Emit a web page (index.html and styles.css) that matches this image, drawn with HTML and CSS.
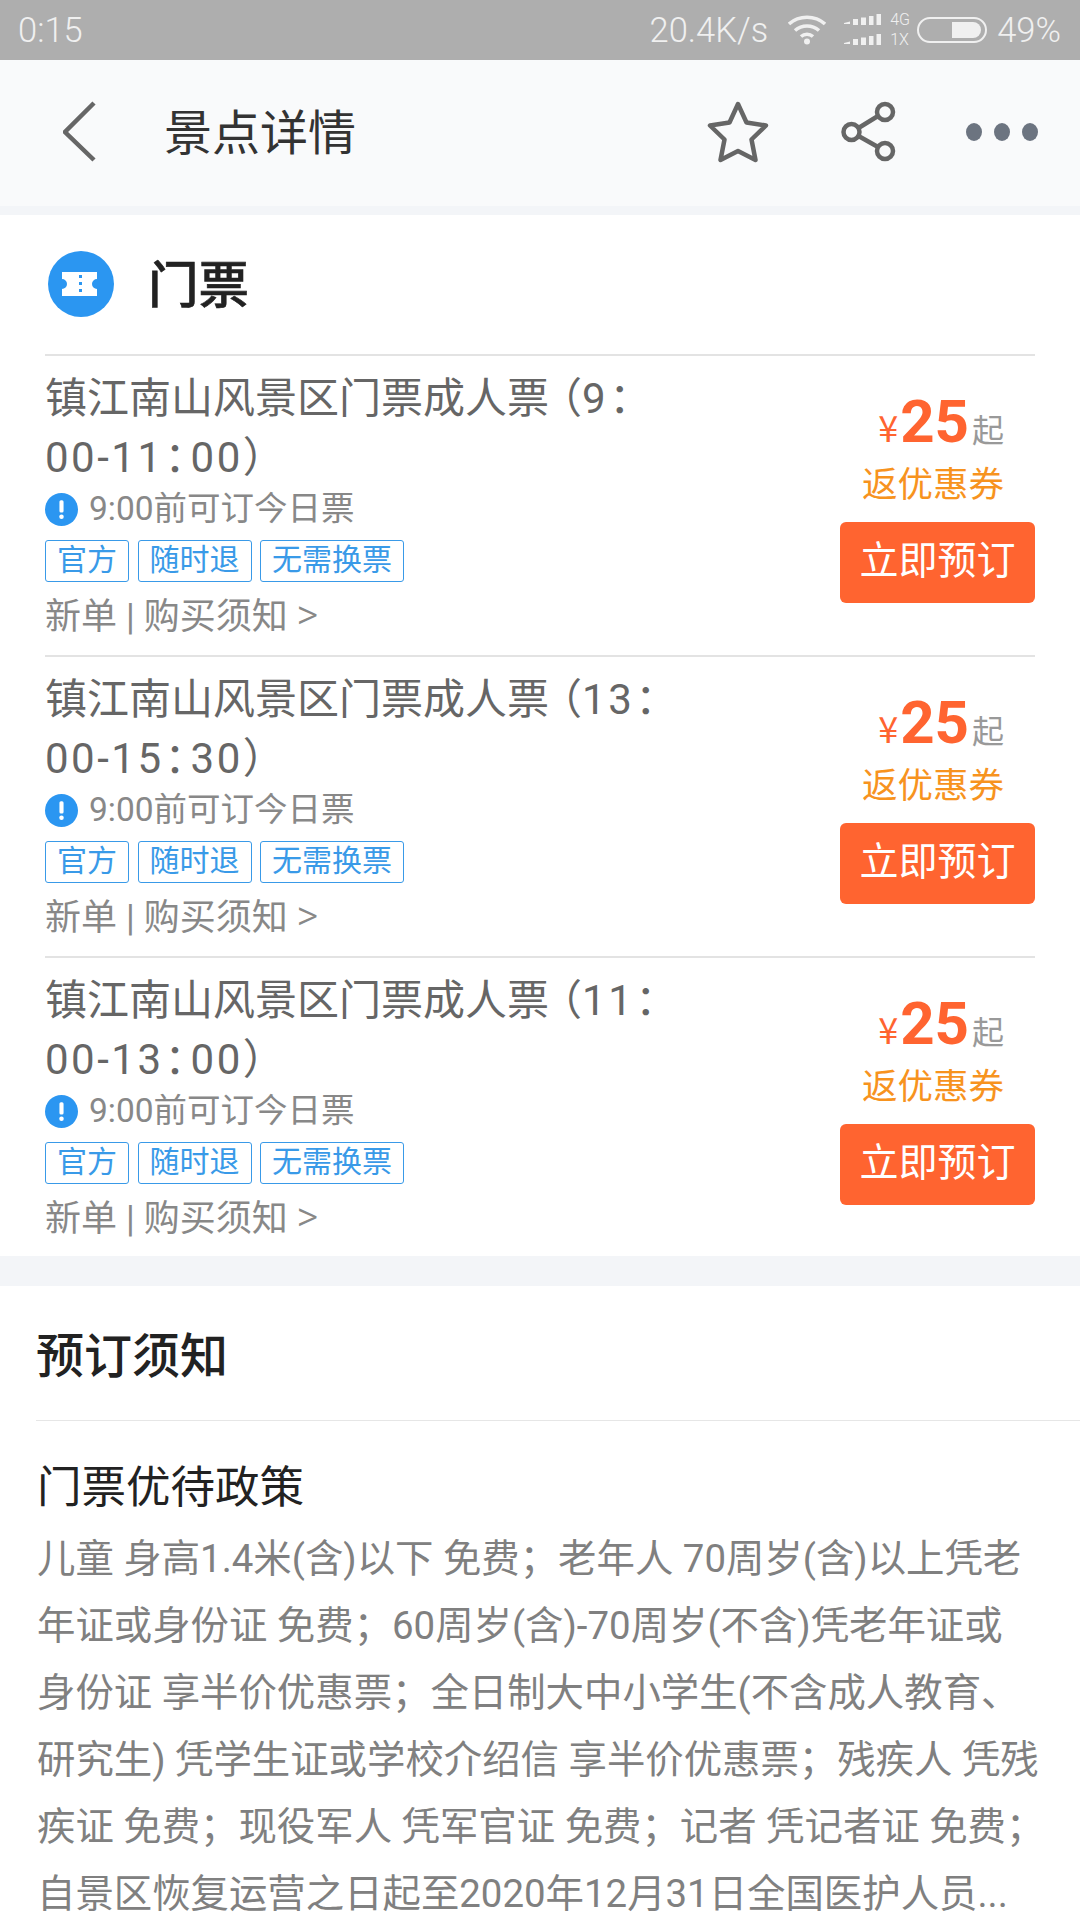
FILE: index.html
```html
<!DOCTYPE html>
<html lang="zh-CN">
<head>
<meta charset="utf-8">
<title>景点详情</title>
<link rel="stylesheet" href="styles.css">
</head>
<body>
<div class="page">
  <header class="status">
    <span class="clock">0:15</span>
    <div class="status-right">
      <span class="speed">20.4K/s</span>
      <svg class="wifi" width="38" height="30" viewBox="0 0 38 30"><path d="M1 9C11 0 27 0 37 9" fill="none" stroke="#f0f0f0" stroke-width="3.6"/><path d="M7 15.500C14 9.500 24 9.500 31 15.500" fill="none" stroke="#f0f0f0" stroke-width="3.600"/><path d="M13 21.500C16.500 18.500 21.500 18.500 25 21.500" fill="none" stroke="#f0f0f0" stroke-width="3.600"/><circle cx="19" cy="26.500" r="3" fill="#f0f0f0"/></svg>
      <svg class="signal" width="37" height="32" viewBox="0 0 37 32"><g fill="#f0f0f0"><path d="M0 10h6V7.500L0 9z"/><rect x="9" y="5" width="5" height="6"/><rect x="17" y="3.500" width="5" height="7.500"/><rect x="25" y="2" width="4.500" height="9"/><rect x="32.500" y="0" width="4.500" height="11"/><path d="M0 30h6v-2.500L0 29z"/><rect x="9" y="25" width="5" height="6"/><rect x="17" y="23.500" width="5" height="7.500"/><rect x="25" y="22" width="4.500" height="9"/><rect x="32.500" y="20" width="4.500" height="11"/></g></svg>
      <div class="net"><span>4G</span><span>1X</span></div>
      <div class="battery"><div class="battery-fill"></div></div>
      <span class="percent">49%</span>
    </div>
  </header>

  <nav class="navbar">
    <svg class="back" width="34" height="64" viewBox="0 0 34 64"><path d="M31 3L2 32L31 60" fill="none" stroke="#666" stroke-width="4.500"/></svg>
    <h1 class="nav-title">景点详情</h1>
    <div class="nav-icons">
      <svg class="star" width="62" height="62" viewBox="0 0 62 62"><path d="M31 3L39.500 21.500L59 24.500L44.500 38.500L48.500 59L31 50L13.500 59L17.500 38.500L3 24.500L22.500 21.500Z" fill="none" stroke="#666" stroke-width="4.500" stroke-linejoin="round"/></svg>
      <svg class="share" width="60" height="62" viewBox="0 0 60 62"><g fill="none" stroke="#666" stroke-width="4.500"><circle cx="10.500" cy="31" r="8"/><circle cx="44" cy="11" r="8"/><circle cx="44" cy="50" r="8"/><path d="M17.500 27L37 15M17.500 35L37 46"/></g></svg>
      <div class="dots"><i></i><i></i><i></i></div>
    </div>
  </nav>

  <section class="tickets">
    <div class="tickets-head">
      <svg class="ticket-icon" width="66" height="66" viewBox="0 0 66 66"><circle cx="33" cy="33" r="33" fill="#2b96f1"/><path d="M14 21H49V28A5 5 0 0 0 49 38V45H14V38A5 5 0 0 0 14 28Z" fill="#fff"/><g fill="#2b96f1"><rect x="31" y="24" width="3" height="3"/><rect x="31" y="31" width="3" height="3"/><rect x="31" y="38" width="3" height="3"/></g></svg>
      <h2 class="tickets-title">门票</h2>
    </div>

    <article class="ticket">
      <div class="ticket-main">
        <h3 class="ticket-name">镇江南山风景区门票成人票<span class="paren">（</span><span class="time">9</span><span class="colon">：</span><br><span class="time">00-11</span><span class="colon">：</span><span class="time">00</span>）</h3>
        <div class="notice"><svg width="33" height="33" viewBox="0 0 32 32"><circle cx="16" cy="16" r="16" fill="#2b96f1"/><rect x="14" y="7" width="4" height="12" rx="1.500" fill="#fff"/><circle cx="16" cy="23" r="2.200" fill="#fff"/></svg><span>9:00前可订今日票</span></div>
        <div class="tags"><span class="tag">官方</span><span class="tag">随时退</span><span class="tag">无需换票</span></div>
        <div class="more">新单 | 购买须知 <span class="arrow">&gt;</span></div>
      </div>
      <div class="ticket-side">
        <div class="price"><span class="yen">¥</span><span class="amount">25</span><span class="from">起</span></div>
        <div class="coupon">返优惠券</div>
        <div class="book">立即预订</div>
      </div>
    </article>

    <article class="ticket">
      <div class="ticket-main">
        <h3 class="ticket-name">镇江南山风景区门票成人票<span class="paren">（</span><span class="time">13</span><span class="colon">：</span><br><span class="time">00-15</span><span class="colon">：</span><span class="time">30</span>）</h3>
        <div class="notice"><svg width="33" height="33" viewBox="0 0 32 32"><circle cx="16" cy="16" r="16" fill="#2b96f1"/><rect x="14" y="7" width="4" height="12" rx="1.500" fill="#fff"/><circle cx="16" cy="23" r="2.200" fill="#fff"/></svg><span>9:00前可订今日票</span></div>
        <div class="tags"><span class="tag">官方</span><span class="tag">随时退</span><span class="tag">无需换票</span></div>
        <div class="more">新单 | 购买须知 <span class="arrow">&gt;</span></div>
      </div>
      <div class="ticket-side">
        <div class="price"><span class="yen">¥</span><span class="amount">25</span><span class="from">起</span></div>
        <div class="coupon">返优惠券</div>
        <div class="book">立即预订</div>
      </div>
    </article>

    <article class="ticket">
      <div class="ticket-main">
        <h3 class="ticket-name">镇江南山风景区门票成人票<span class="paren">（</span><span class="time">11</span><span class="colon">：</span><br><span class="time">00-13</span><span class="colon">：</span><span class="time">00</span>）</h3>
        <div class="notice"><svg width="33" height="33" viewBox="0 0 32 32"><circle cx="16" cy="16" r="16" fill="#2b96f1"/><rect x="14" y="7" width="4" height="12" rx="1.500" fill="#fff"/><circle cx="16" cy="23" r="2.200" fill="#fff"/></svg><span>9:00前可订今日票</span></div>
        <div class="tags"><span class="tag">官方</span><span class="tag">随时退</span><span class="tag">无需换票</span></div>
        <div class="more">新单 | 购买须知 <span class="arrow">&gt;</span></div>
      </div>
      <div class="ticket-side">
        <div class="price"><span class="yen">¥</span><span class="amount">25</span><span class="from">起</span></div>
        <div class="coupon">返优惠券</div>
        <div class="book">立即预订</div>
      </div>
    </article>
  </section>

  <section class="booking">
    <h2 class="booking-title">预订须知</h2>
    <div class="booking-body">
      <h3 class="policy-title">门票优待政策</h3>
      <p class="policy-text">儿童 身高1.4米(含)以下 免费；老年人 70周岁(含)以上凭老<br>年证或身份证 免费；60周岁(含)-70周岁(不含)凭老年证或<br>身份证 享半价优惠票；全日制大中小学生(不含成人教育、<br>研究生) 凭学生证或学校介绍信 享半价优惠票；残疾人 凭残<br>疾证 免费；现役军人 凭军官证 免费；记者 凭记者证 免费；<br>自景区恢复运营之日起至2020年12月31日全国医护人员...</p>
    </div>
  </section>
</div>
</body>
</html>
```
FILE: styles.css
```css
* { box-sizing: border-box; }
html, body { margin: 0; padding: 0; background: #fff; }
body { font-family: Roboto, "Noto Sans CJK SC", sans-serif; }
h1, h2, h3, p { margin: 0; font-weight: 400; }
.page { width: 1080px; height: 1920px; overflow: hidden; background: #fff; }

.status { height: 60px; background: #aeaeae; color: #f0f0f0; display: flex; align-items: center; justify-content: space-between; padding: 0 19px 0 18px; font-weight: 300; font-size: 34.500px; }
.status-right { display: flex; align-items: center; }
.speed { margin-right: 20px; }
.wifi { margin-right: 18px; }
.signal { margin-right: 9px; }
.net { display: flex; flex-direction: column; font-size: 16px; line-height: 20px; width: 27px; }
.battery { width: 70px; height: 26px; border: 2px solid #f0f0f0; border-radius: 13px; padding: 3px 4px 3px 33px; margin-right: 10px; }
.battery-fill { height: 100%; background: #f0f0f0; border-radius: 0 8px 8px 0; }

.navbar { height: 146px; background: #f9fafb; display: flex; align-items: center; padding: 0 0 2px 63px; }
.nav-title { font-size: 48px; color: #333; margin: 4px 0 0 67px; line-height: 1; }
.nav-icons { margin-left: auto; display: flex; align-items: center; padding-right: 42px; }
.star { margin-right: 72px; }
.share { margin-right: 65px; }
.dots { display: flex; gap: 12px; }
.dots i { display: block; width: 16px; height: 18px; border-radius: 50%; background: #6c7480; }

.tickets { margin-top: 9px; background: #fff; padding: 0 45px; height: 1041px; box-shadow: 0 -9px 0 #f3f5f8; }
.tickets-head { height: 139px; display: flex; align-items: center; padding: 0 0 0 3px; }
.tickets-head svg { display: block; margin-top: -1px; }
.tickets-title { font-size: 50.500px; font-weight: 500; color: #222; margin: 3px 0 0 34px; line-height: 1; -webkit-text-stroke: 0.6px #222; }

.ticket { height: 301px; border-top: 2px solid #e3e3e3; display: flex; justify-content: space-between; }
.ticket-main { padding-top: 13px; }
.ticket-name { font-size: 42px; line-height: 59px; color: #666; }
.paren { font-feature-settings: "halt"; margin-left: 12px; }
.time { letter-spacing: 2.500px; }
.colon { font-feature-settings: "halt"; margin-left: 1px; margin-right: 5px; }
.notice { display: flex; align-items: center; gap: 11px; font-size: 33.500px; line-height: 44px; color: #888; height: 44px; }
.notice svg { display: block; }
.tags { display: flex; gap: 8.500px; margin-top: 9px; }
.tag { border: 1px solid #399ae8; border-radius: 3px; height: 42px; padding: 0 11px; font-size: 30px; line-height: 38px; color: #399ae8; }
.more { font-size: 36px; line-height: 50px; color: #888; margin-top: 10px; }
.arrow { font-size: 42px; font-weight: 300; line-height: 1; }

.ticket-side { width: 195px; display: flex; flex-direction: column; align-items: stretch; padding-top: 40px; }
.price { height: 52px; display: flex; align-items: baseline; justify-content: flex-end; padding-right: 31px; color: #ff6430; line-height: 52px; }
.yen { font-size: 36px; font-family: "Noto Sans CJK SC", sans-serif; }
.amount { font-size: 60px; font-weight: 700; margin-left: 2px; }
.from { font-size: 32px; color: #999; margin-left: 3px; font-family: "Noto Sans CJK SC", sans-serif; }
.coupon { font-size: 35.500px; line-height: 46px; color: #f7931e; text-align: right; padding-right: 31px; margin-top: 14px; }
.book { height: 81px; margin-top: 14px; background: #ff6430; border-radius: 6px; color: #fff; font-size: 39px; line-height: 79px; text-align: center; }

.booking { margin-top: 30px; background: #fff; box-shadow: 0 -30px 0 #f3f5f8; }
.booking-title { height: 135px; margin-left: 36px; font-size: 48px; font-weight: 500; line-height: 142px; color: #222; border-bottom: 1px solid #e6e6e6; }
.booking-body { padding: 36px 20px 0 37px; }
.policy-title { font-size: 44.500px; line-height: 62px; color: #222; }
.policy-text { font-size: 38.400px; line-height: 67px; color: #808080; white-space: nowrap; margin-top: 6px; }
```
